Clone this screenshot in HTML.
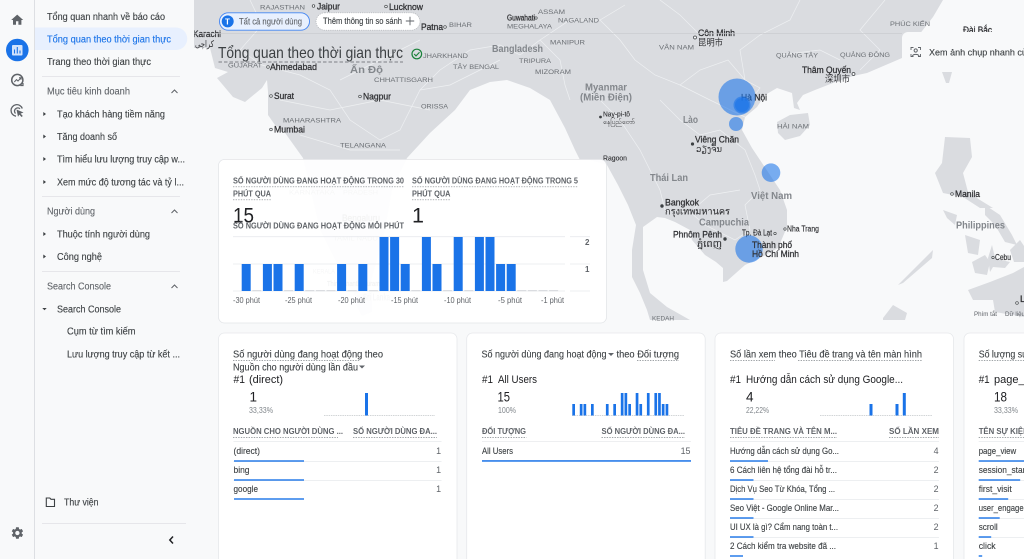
<!DOCTYPE html>
<html lang="vi"><head><meta charset="utf-8"><title>Tổng quan theo thời gian thực</title>
<style>
html,body{margin:0;padding:0;width:1024px;height:559px;overflow:hidden;background:#f8f9fa}
svg{display:block;position:absolute;left:0;top:0;filter:blur(.38px)}
text{font-family:"Liberation Sans","Noto Sans CJK SC","DejaVu Sans",sans-serif;white-space:pre}
.m{font-size:9.8px;fill:#3c4043;stroke:#3c4043;stroke-width:.12}
.g{font-size:9.8px;fill:#5f6368;stroke:#5f6368;stroke-width:.1}
.b{font-size:9.8px;fill:#1a73e8;stroke:#1a73e8;stroke-width:.12}
.c{font-size:9.2px;fill:#303134;stroke:#303134;stroke-width:.28}
.s{font-size:6.8px;fill:#6b6f74}
.n{font-size:10.4px;fill:#83878c;font-weight:bold}
.h{font-size:7.9px;fill:#5f6368;font-weight:bold}
.t{font-size:9.8px;fill:#3c4043;stroke:#3c4043;stroke-width:.1}
.r{font-size:8.9px;fill:#3c4043;stroke:#3c4043;stroke-width:.12}
.v{font-size:8.9px;fill:#5f6368;text-anchor:end}
.k{font-size:11px;fill:#202124}
.p{font-size:8.3px;fill:#80868b}
.a{font-size:8px;fill:#5f6368}
.d{fill:none;stroke:#80868b;stroke-width:.7;stroke-dasharray:1.4 1.2}
.w{fill:none;stroke:#eef0f2;stroke-width:.7}
</style></head><body>
<svg width="1024" height="559" viewBox="0 0 1024 559" xmlns="http://www.w3.org/2000/svg">
<rect width="1024" height="559" fill="#f8f9fa"/>

<!-- MAP -->
<g>
<path fill="#dadce0" d="M194,0H943L933,17L915,40L902,58L867,73L853,76L833,83L815,90L803,95L797,103L800,110L794,108L792,93L777,88L765,95L757,107L745,117L742,130L752,148L760,160L770,175L780,190L787,210L787,227L778,248L760,258L745,265L727,281L723,282L723,268L716,262L705,255L692,240L690,230L675,222L665,218L657,217L643,227L643,270L650,293L667,307L690,320H650L647,310L640,293L632,277L632,250L636,225L628,205L618,185L607,165L590,160L580,160L575,150L565,128L550,100L530,88L507,80L490,82L470,90L455,110L430,133L407,158L392,190L385,230L370,285L355,295L345,280L320,230L303,158L283,130L275,125L268,115L268,92L267,80L262,88L245,102L233,97L217,78L228,72L215,68L210,48L195,48H194Z"/>
<path fill="#dadce0" d="M777,122L790,115L808,113L810,125L800,136L785,140L778,133Z"/>
<path fill="#dadce0" d="M942,72L952,72L949,83L946,83Z"/>
<path fill="#dadce0" d="M945,137L970,138L972,157L963,173L968,192L980,200L993,208L980,208L963,197L943,193L935,173L942,163Z"/>
<path fill="#dadce0" d="M943,210L957,215L955,225L947,218Z"/>
<path fill="#dadce0" d="M985,205L1000,215L1012,235L1017,245L1005,242L995,225L985,215Z"/>
<path fill="#dadce0" d="M965,235L980,240L978,255L968,253Z"/>
<path fill="#dadce0" d="M972,262L985,255L990,262L987,275L975,273Z"/>
<path fill="#dadce0" d="M992,245L996,262L990,272L988,258Z"/>
<path fill="#dadce0" d="M993,258L1010,262L1005,268L993,267Z"/>
<path fill="#dadce0" d="M968,290L990,282L1013,273L1024,267V317L995,312L993,300L973,300Z"/>
<path fill="#dadce0" d="M898,285L923,260L933,250L932,258L903,283Z"/>
<path fill="#dadce0" d="M883,318L893,305L907,313L905,320H883Z"/>
<path fill="#dadce0" d="M356,295L372,292L372,312L362,316L356,305Z"/>
<path fill="#dadce0" d="M1010,250L1020,240L1024,246V262L1014,262Z"/>
<!-- borders -->
<path class="w" d="M250,0L262,25L240,50L262,65L300,75L330,90L350,120L380,140L400,130L420,90L440,70L470,50L500,45L520,55L540,40L560,60"/>
<path class="w" d="M420,90L450,85L500,60M340,80L380,60L420,40M280,100L330,110L380,100L430,110M300,135L350,150L400,150"/>
<path class="w" d="M540,40L570,20L600,20L625,5M560,60L565,85L570,100M600,20L620,40L635,60L655,75L680,85L700,70L728,60L745,80L760,88L752,98M745,117L710,100L680,85M660,100L680,120L700,135L720,130L745,150L755,175L760,190L745,205L750,230L735,240L705,225L690,212L665,210L660,190L650,170L640,150L620,120L600,100L585,90"/>
<path class="w" d="M800,0L790,20L760,35L740,50L745,80M885,0L860,30L880,50L860,70M700,35L680,15L660,0M780,55L820,50L840,60M690,212L710,195L740,190"/>

<g class="s">
<text class="s" x="260" y="9.5" textLength="45" lengthAdjust="spacingAndGlyphs">RAJASTHAN</text>
<text class="s" x="449" y="27" textLength="23" lengthAdjust="spacingAndGlyphs">BIHAR</text>
<text class="s" x="538" y="14" textLength="27" lengthAdjust="spacingAndGlyphs">ASSAM</text>
<text class="s" x="558" y="22.5" textLength="41" lengthAdjust="spacingAndGlyphs">NAGALAND</text>
<text class="s" x="507" y="28.5" textLength="45" lengthAdjust="spacingAndGlyphs">MEGHALAYA</text>
<text class="s" x="550" y="44.5" textLength="35" lengthAdjust="spacingAndGlyphs">MANIPUR</text>
<text class="s" x="423" y="58" textLength="45" lengthAdjust="spacingAndGlyphs">JHARKHAND</text>
<text class="s" x="453" y="69" textLength="46" lengthAdjust="spacingAndGlyphs">TÂY BENGAL</text>
<text class="s" x="519" y="63" textLength="32" lengthAdjust="spacingAndGlyphs">TRIPURA</text>
<text class="s" x="535" y="74" textLength="36" lengthAdjust="spacingAndGlyphs">MIZORAM</text>
<text class="s" x="228" y="67.5" textLength="34" lengthAdjust="spacingAndGlyphs">GUJARAT</text>
<text class="s" x="374" y="82" textLength="59" lengthAdjust="spacingAndGlyphs">CHHATTISGARH</text>
<text class="s" x="421" y="108.5" textLength="27" lengthAdjust="spacingAndGlyphs">ORISSA</text>
<text class="s" x="283" y="122.5" textLength="58" lengthAdjust="spacingAndGlyphs">MAHARASHTRA</text>
<text class="s" x="340" y="147.5" textLength="46" lengthAdjust="spacingAndGlyphs">TELANGANA</text>
<text class="s" x="659" y="49.5" textLength="35" lengthAdjust="spacingAndGlyphs">VÂN NAM</text>
<text class="s" x="776" y="57.5" textLength="42" lengthAdjust="spacingAndGlyphs">QUẢNG TÂY</text>
<text class="s" x="840" y="57" textLength="50" lengthAdjust="spacingAndGlyphs">QUẢNG ĐÔNG</text>
<text class="s" x="890" y="26" textLength="40" lengthAdjust="spacingAndGlyphs">PHÚC KIẾN</text>
<text class="s" x="777" y="128.5" textLength="32" lengthAdjust="spacingAndGlyphs">HẢI NAM</text>
<text class="s" x="652" y="320.5" textLength="22" lengthAdjust="spacingAndGlyphs">KEDAH</text>
<text class="s" x="289" y="194.5" textLength="46" lengthAdjust="spacingAndGlyphs">KARNATAKA</text>
<text class="s" x="343" y="194.5" textLength="35" lengthAdjust="spacingAndGlyphs">PRADESH</text>
<text class="s" x="333" y="240.5" textLength="45" lengthAdjust="spacingAndGlyphs">TAMIL NADU</text>
<text class="s" x="313" y="273.5" textLength="22" lengthAdjust="spacingAndGlyphs">KERALA</text>
</g>
<g>
<text class="n" x="492" y="52" textLength="51" lengthAdjust="spacingAndGlyphs">Bangladesh</text>
<text class="n" x="350" y="73" textLength="33" lengthAdjust="spacingAndGlyphs">Ấn Độ</text>
<text class="n" x="585" y="90.5" textLength="42" lengthAdjust="spacingAndGlyphs">Myanmar</text>
<text class="n" x="580" y="100.5" textLength="52" lengthAdjust="spacingAndGlyphs">(Miền Điện)</text>
<text class="n" x="683" y="123" textLength="15" lengthAdjust="spacingAndGlyphs">Lào</text>
<text class="n" x="650" y="181" textLength="38" lengthAdjust="spacingAndGlyphs">Thái Lan</text>
<text class="n" x="751" y="199" textLength="41" lengthAdjust="spacingAndGlyphs">Việt Nam</text>
<text class="n" x="699" y="225.5" textLength="50" lengthAdjust="spacingAndGlyphs">Campuchia</text>
<text class="n" x="956" y="228.5" textLength="49" lengthAdjust="spacingAndGlyphs">Philippines</text>
</g>
<g>
<text class="c" x="317" y="9.5" textLength="23" lengthAdjust="spacingAndGlyphs">Jaipur</text>
<text class="c" x="389" y="10" textLength="34" lengthAdjust="spacingAndGlyphs">Lucknow</text>
<text class="c" x="421" y="30" textLength="22" lengthAdjust="spacingAndGlyphs">Patna</text>
<text class="c" x="507" y="20.5" textLength="28" lengthAdjust="spacingAndGlyphs" style="font-size:7.8px">Guwahati</text>
<text class="c" x="193" y="37" textLength="28" lengthAdjust="spacingAndGlyphs">Karachi</text>
<text class="c" x="195" y="47" textLength="19" lengthAdjust="spacingAndGlyphs" style="stroke-width:0">کراچی</text>
<text class="c" x="270" y="70" textLength="47" lengthAdjust="spacingAndGlyphs">Ahmedabad</text>
<text class="c" x="274" y="99" textLength="20" lengthAdjust="spacingAndGlyphs">Surat</text>
<text class="c" x="363" y="99.5" textLength="28" lengthAdjust="spacingAndGlyphs">Nagpur</text>
<text class="c" x="274" y="132.5" textLength="31" lengthAdjust="spacingAndGlyphs">Mumbai</text>
<text class="c" x="698" y="36" textLength="37" lengthAdjust="spacingAndGlyphs">Côn Minh</text>
<text class="c" x="698" y="45.5" textLength="25" lengthAdjust="spacingAndGlyphs" style="stroke-width:0">昆明市</text>
<text class="c" x="963" y="33" textLength="29" lengthAdjust="spacingAndGlyphs">Đài Bắc</text>
<text class="c" x="802" y="73" textLength="49" lengthAdjust="spacingAndGlyphs">Thâm Quyến</text>
<text class="c" x="825" y="82" textLength="25" lengthAdjust="spacingAndGlyphs" style="stroke-width:0">深圳市</text>
<text class="c" x="741" y="100.5" textLength="26" lengthAdjust="spacingAndGlyphs">Hà Nội</text>
<text class="c" x="695" y="142.5" textLength="44" lengthAdjust="spacingAndGlyphs">Viêng Chăn</text>
<text class="c" x="696" y="152" textLength="26" lengthAdjust="spacingAndGlyphs" style="stroke-width:0">ວຽງຈັນ</text>
<text class="c" x="603" y="116.5" textLength="27" lengthAdjust="spacingAndGlyphs" style="font-size:7px;stroke-width:.12">Nay-pi-tô</text>
<text class="c" x="603" y="124" textLength="32" lengthAdjust="spacingAndGlyphs" style="font-size:7px;stroke-width:0">နေပြည်တော်</text>
<text class="c" x="603" y="160.5" textLength="24" lengthAdjust="spacingAndGlyphs" style="font-size:7px;stroke-width:.12">Ragoon</text>
<text class="c" x="665" y="205.5" textLength="34" lengthAdjust="spacingAndGlyphs">Bangkok</text>
<text class="c" x="665" y="214.5" textLength="65" lengthAdjust="spacingAndGlyphs" style="stroke-width:.1">กรุงเทพมหานคร</text>
<text class="c" x="742" y="235.5" textLength="30" lengthAdjust="spacingAndGlyphs" style="font-size:7.8px;stroke-width:.15">Tp. Đà Lạt</text>
<text class="c" x="787" y="231.5" textLength="32" lengthAdjust="spacingAndGlyphs" style="font-size:7.8px;stroke-width:.15">Nha Trang</text>
<text class="c" x="673" y="237.5" textLength="49" lengthAdjust="spacingAndGlyphs">Phnôm Pênh</text>
<text class="c" x="697" y="247" textLength="25" lengthAdjust="spacingAndGlyphs" style="stroke-width:.1">ភ្នំពេញ</text>
<text class="c" x="955" y="197" textLength="25" lengthAdjust="spacingAndGlyphs">Manila</text>
<text class="c" x="995" y="260" textLength="16" lengthAdjust="spacingAndGlyphs" style="font-size:7.8px;stroke-width:.15">Cebu</text>
<text class="c" x="1020" y="302">L</text>
<text class="c" x="342" y="221" textLength="38" lengthAdjust="spacingAndGlyphs">Bengaluru</text>
<text class="c" x="327" y="286" textLength="53" lengthAdjust="spacingAndGlyphs" style="font-size:7px">Thiruvananthapuram</text>
<text class="n" x="363" y="300.5" textLength="27" lengthAdjust="spacingAndGlyphs">Sri Lanka</text>
</g>
<g fill="#f8f9fa" stroke="#3c4043" stroke-width=".7">
<circle cx="313.5" cy="6" r="1.3"/><circle cx="386" cy="6.5" r="1.3"/><circle cx="445" cy="27" r="1.3"/><circle cx="536" cy="18" r="1.2"/>
<circle cx="268" cy="67" r="1.3"/><circle cx="271" cy="96" r="1.3"/><circle cx="360" cy="96.5" r="1.3"/><circle cx="271" cy="129.5" r="1.3"/>
<circle cx="695" cy="37.5" r="1.5"/><circle cx="853.5" cy="74" r="1.5"/><circle cx="775" cy="233.5" r="1.2"/><circle cx="785" cy="229" r="1.2"/>
<circle cx="952" cy="194" r="1.3"/><circle cx="993" cy="257.5" r="1.2"/><circle cx="1017" cy="303" r="1.3"/>
</g>
<g fill="#3c4043">
<circle cx="692.5" cy="144" r="1.6"/><circle cx="662" cy="206" r="1.7"/><circle cx="725" cy="239" r="1.7"/><circle cx="600.5" cy="117" r="1.4"/>
</g>
<path d="M194,33.3H902" stroke="#c6c8cc" stroke-width=".7"/>
<text x="974" y="316" class="a" style="font-size:6.2px" textLength="23" lengthAdjust="spacingAndGlyphs">Phím tắt</text>
<text x="1005" y="316" class="a" style="font-size:6.2px">Dữ liệu</text>
<!-- bubbles -->
<g fill="#1a73e8" fill-opacity=".58">
<circle cx="737" cy="97" r="18.5"/><circle cx="742" cy="105" r="8.5"/><circle cx="742" cy="105" r="7"/>
<circle cx="736" cy="124" r="7"/><circle cx="771" cy="172.7" r="9.3"/><circle cx="749" cy="249" r="13.7"/>
</g>
<text class="c" x="752" y="248" textLength="40" lengthAdjust="spacingAndGlyphs">Thành phố</text>
<text class="c" x="752" y="257" textLength="47" lengthAdjust="spacingAndGlyphs">Hồ Chí Minh</text>
</g>

<!-- header chips -->
<rect x="219.5" y="12.8" width="90" height="17.4" rx="8.7" fill="#e8f0fe" stroke="#4285f4" stroke-width=".9"/>
<circle cx="227.7" cy="21.4" r="6" fill="#1a73e8"/>
<text x="225" y="24.4" style="font-size:8px;font-weight:bold;fill:#fff">T</text>
<text class="g" style="font-size:8.8px" x="239" y="24.3" textLength="63" lengthAdjust="spacingAndGlyphs">Tất cả người dùng</text>
<rect x="316" y="12.8" width="104" height="17.4" rx="8.7" fill="#fff" stroke="#aeb1b5" stroke-width=".7" stroke-dasharray="1.2 1"/>
<text class="m" style="font-size:8.8px" x="323" y="24" textLength="79" lengthAdjust="spacingAndGlyphs">Thêm thông tin so sánh</text>
<path d="M410,16.8V25.2M405.8,21H414.2" stroke="#5f6368" stroke-width=".9"/>

<text x="218" y="58" style="font-size:15.6px;fill:#3c4043" textLength="185" lengthAdjust="spacingAndGlyphs">Tổng quan theo thời gian thực</text>
<path d="M218.5,62H403" stroke="#5f6368" stroke-width=".8" stroke-dasharray="3.5 2"/>
<circle cx="416.8" cy="54" r="4.8" fill="none" stroke="#188038" stroke-width="1.2"/>
<path d="M414.2,54L416,55.9L419.5,52.3" fill="none" stroke="#188038" stroke-width="1.1"/>

<!-- snapshot panel -->
<path d="M902,72V38a6,6 0 0 1 6,-6H1024V72Z" fill="#f8f9fa"/>
<g fill="none" stroke="#5f6368" stroke-width="1">
<path d="M911,50V47.5H913.5M918,47.5H920.5V50M911,54V56.5H913.5M918,56.5H920.5V54" stroke-width=".9"/>
<circle cx="915.7" cy="50.5" r="1.6"/>
<path d="M912.5,56C913,53.8 918.4,53.8 919,56"/>
</g>
<text class="m" style="font-size:9.6px" x="929" y="55.5" textLength="103" lengthAdjust="spacingAndGlyphs">Xem ảnh chụp nhanh của</text>

<!-- realtime card -->
<rect x="218.5" y="159.5" width="388" height="163.5" rx="6" fill="#fff" fill-opacity=".94" stroke="#e3e5e8" stroke-width=".8"/>
<text class="h" x="233" y="183.5" textLength="171" lengthAdjust="spacingAndGlyphs">SỐ NGƯỜI DÙNG ĐANG HOẠT ĐỘNG TRONG 30</text>
<text class="h" x="233" y="196.5" textLength="38" lengthAdjust="spacingAndGlyphs">PHÚT QUA</text>
<path class="d" d="M233,186.8H404M233,199.8H271"/>
<text class="h" x="412" y="183.5" textLength="166" lengthAdjust="spacingAndGlyphs">SỐ NGƯỜI DÙNG ĐANG HOẠT ĐỘNG TRONG 5</text>
<text class="h" x="412" y="196.5" textLength="38.5" lengthAdjust="spacingAndGlyphs">PHÚT QUA</text>
<path class="d" d="M412,186.8H578M412,199.8H450.5"/>
<text x="233" y="222.5" style="font-size:21.5px;fill:#202124" textLength="21" lengthAdjust="spacingAndGlyphs">15</text>
<text x="412" y="222.5" style="font-size:21.5px;fill:#202124">1</text>
<text class="h" x="233" y="228.5" textLength="171" lengthAdjust="spacingAndGlyphs">SỐ NGƯỜI DÙNG ĐANG HOẠT ĐỘNG MỖI PHÚT</text>
<g stroke="#e8eaed" stroke-width=".8">
<path d="M233,236.7H565M570,236.7H590M233,264H565M570,264H590M233,291H565M570,291H590"/>
</g>
<g fill="#1a73e8">
<rect x="241.7" y="264" width="9" height="27"/><rect x="262.9" y="264" width="9" height="27"/><rect x="273.5" y="264" width="9" height="27"/><rect x="294.7" y="264" width="9" height="27"/>
<rect x="337.1" y="264" width="9" height="27"/><rect x="358.3" y="264" width="9" height="27"/><rect x="379.5" y="237" width="9" height="54"/><rect x="390.1" y="237" width="9" height="54"/>
<rect x="400.7" y="264" width="9" height="27"/><rect x="421.9" y="237" width="9" height="54"/><rect x="432.5" y="264" width="9" height="27"/><rect x="453.7" y="237" width="9" height="54"/>
<rect x="474.9" y="237" width="9" height="54"/><rect x="485.5" y="237" width="9" height="54"/><rect x="496.1" y="264" width="9" height="27"/><rect x="506.7" y="264" width="9" height="27"/>
</g>
<g fill="#dadce0">
<rect x="252.3" y="290" width="9" height="1.2"/><rect x="284.1" y="290" width="9" height="1.2"/><rect x="305.3" y="290" width="9" height="1.2"/><rect x="315.9" y="290" width="9" height="1.2"/><rect x="326.5" y="290" width="9" height="1.2"/><rect x="347.7" y="290" width="9" height="1.2"/><rect x="368.9" y="290" width="9" height="1.2"/><rect x="411.3" y="290" width="9" height="1.2"/><rect x="443.1" y="290" width="9" height="1.2"/><rect x="464.3" y="290" width="9" height="1.2"/><rect x="517.3" y="290" width="9" height="1.2"/><rect x="527.9" y="290" width="9" height="1.2"/><rect x="538.5" y="290" width="9" height="1.2"/><rect x="549.1" y="290" width="9" height="1.2"/>
</g>
<text class="a" x="585" y="245" style="font-weight:bold">2</text>
<text class="a" x="585" y="272" style="font-weight:bold">1</text>
<g class="a">
<text class="a" x="233" y="303" textLength="27" lengthAdjust="spacingAndGlyphs">-30 phút</text>
<text class="a" x="285" y="303" textLength="27" lengthAdjust="spacingAndGlyphs">-25 phút</text>
<text class="a" x="338" y="303" textLength="27" lengthAdjust="spacingAndGlyphs">-20 phút</text>
<text class="a" x="391" y="303" textLength="27" lengthAdjust="spacingAndGlyphs">-15 phút</text>
<text class="a" x="444" y="303" textLength="27" lengthAdjust="spacingAndGlyphs">-10 phút</text>
<text class="a" x="498" y="303" textLength="24" lengthAdjust="spacingAndGlyphs">-5 phút</text>
<text class="a" x="541" y="303" textLength="23" lengthAdjust="spacingAndGlyphs">-1 phút</text>
</g>

<!-- CARD 1 -->
<rect x="218.5" y="333" width="238.5" height="240" rx="6" fill="#fff" stroke="#e6e8eb" stroke-width=".8"/>
<text class="t" x="233" y="357.3" textLength="150" lengthAdjust="spacingAndGlyphs">Số người dùng đang hoạt động theo</text>
<path class="d" d="M233,360.5H360"/>
<text class="t" x="233" y="370.3" textLength="125" lengthAdjust="spacingAndGlyphs">Nguồn cho người dùng lần đầu</text>
<path d="M359,365.5H365L362,368.5Z" fill="#5f6368"/>
<text class="k" x="233.5" y="383" textLength="11.5" lengthAdjust="spacingAndGlyphs">#1</text>
<text class="k" x="249" y="383" textLength="34" lengthAdjust="spacingAndGlyphs">(direct)</text>
<text x="249.5" y="401.5" style="font-size:13.5px;fill:#202124">1</text>
<text class="p" x="249" y="413" textLength="24" lengthAdjust="spacingAndGlyphs">33,33%</text>
<path d="M324,415.5H435" stroke="#c4c7ca" stroke-width=".7" stroke-dasharray="1.5 .8"/>
<rect x="365" y="393" width="3" height="22.5" fill="#1a73e8"/>
<text class="h" x="233" y="434" textLength="110" lengthAdjust="spacingAndGlyphs">NGUỒN CHO NGƯỜI DÙNG ...</text>
<text class="h" x="353" y="434" textLength="84" lengthAdjust="spacingAndGlyphs">SỐ NGƯỜI DÙNG ĐA...</text>
<path class="d" d="M233,437.5H338M353,437.5H437"/>
<path d="M233.5,441.5H441.5M233.5,461.5H441.5M233.5,480.5H441.5" stroke="#e8eaed" stroke-width=".8"/>
<text class="r" x="233.5" y="454" textLength="26.5" lengthAdjust="spacingAndGlyphs">(direct)</text><text class="v" x="441" y="454">1</text>
<text class="r" x="233.5" y="473" textLength="16" lengthAdjust="spacingAndGlyphs">bing</text><text class="v" x="441" y="473">1</text>
<text class="r" x="233.5" y="492" textLength="24.5" lengthAdjust="spacingAndGlyphs">google</text><text class="v" x="441" y="492">1</text>
<g fill="#1a73e8"><rect x="234" y="460.3" width="70" height="1.4"/><rect x="234" y="479.3" width="70" height="1.4"/><rect x="234" y="498.3" width="70" height="1.4"/></g>

<!-- CARD 2 -->
<rect x="466.7" y="333" width="238.5" height="240" rx="6" fill="#fff" stroke="#e6e8eb" stroke-width=".8"/>
<text class="t" x="481.5" y="357.3" textLength="125" lengthAdjust="spacingAndGlyphs">Số người dùng đang hoạt động</text>
<path d="M608,353H614L611,356Z" fill="#5f6368"/>
<text class="t" x="616.5" y="357.3" textLength="62.5" lengthAdjust="spacingAndGlyphs">theo Đối tượng</text>
<path class="d" d="M637,360.5H679"/>
<text class="k" x="482" y="383" textLength="11" lengthAdjust="spacingAndGlyphs">#1</text>
<text class="k" x="498" y="383" textLength="39" lengthAdjust="spacingAndGlyphs">All Users</text>
<text x="497.5" y="401.5" style="font-size:13.5px;fill:#202124" textLength="12.5" lengthAdjust="spacingAndGlyphs">15</text>
<text class="p" x="498" y="413" textLength="18" lengthAdjust="spacingAndGlyphs">100%</text>
<path d="M572,415.5H684" stroke="#c4c7ca" stroke-width=".7" stroke-dasharray="1.5 .8"/>
<g fill="#1a73e8">
<rect x="572.3" y="404" width="2.7" height="11.5"/><rect x="579.8" y="404" width="2.7" height="11.5"/><rect x="583.5" y="404" width="2.7" height="11.5"/><rect x="591" y="404" width="2.7" height="11.5"/>
<rect x="605.9" y="404" width="2.7" height="11.5"/><rect x="613.3" y="404" width="2.7" height="11.5"/><rect x="620.8" y="393" width="2.7" height="22.5"/><rect x="624.5" y="393" width="2.7" height="22.5"/>
<rect x="628.3" y="404" width="2.7" height="11.5"/><rect x="635.7" y="393" width="2.7" height="22.5"/><rect x="639.4" y="404" width="2.7" height="11.5"/><rect x="646.9" y="393" width="2.7" height="22.5"/>
<rect x="654.4" y="393" width="2.7" height="22.5"/><rect x="658.1" y="393" width="2.7" height="22.5"/><rect x="661.8" y="404" width="2.7" height="11.5"/><rect x="665.6" y="404" width="2.7" height="11.5"/>
</g>
<text class="h" x="482" y="434" textLength="44" lengthAdjust="spacingAndGlyphs">ĐỐI TƯỢNG</text>
<text class="h" x="601.5" y="434" textLength="83.5" lengthAdjust="spacingAndGlyphs">SỐ NGƯỜI DÙNG ĐA...</text>
<path class="d" d="M482,437.5H526.5M601.5,437.5H685"/>
<path d="M482,441.5H691" stroke="#e8eaed" stroke-width=".8"/>
<text class="r" x="482" y="454" textLength="31" lengthAdjust="spacingAndGlyphs">All Users</text><text class="v" x="690.5" y="454">15</text>
<rect x="482" y="460.2" width="209" height="1.5" fill="#1a73e8"/>

<!-- CARD 3 -->
<rect x="715" y="333" width="238.5" height="240" rx="6" fill="#fff" stroke="#e6e8eb" stroke-width=".8"/>
<text class="t" x="730" y="357.3" textLength="192" lengthAdjust="spacingAndGlyphs">Số lần xem theo Tiêu đề trang và tên màn hình</text>
<path class="d" d="M730,360.5H775M798,360.5H922"/>
<text class="k" x="730" y="383" textLength="11" lengthAdjust="spacingAndGlyphs">#1</text>
<text class="k" x="746" y="383" textLength="157" lengthAdjust="spacingAndGlyphs">Hướng dẫn cách sử dụng Google...</text>
<text x="746" y="401.5" style="font-size:13.5px;fill:#202124">4</text>
<text class="p" x="746" y="413" textLength="23" lengthAdjust="spacingAndGlyphs">22,22%</text>
<path d="M820,415.5H932" stroke="#c4c7ca" stroke-width=".7" stroke-dasharray="1.5 .8"/>
<g fill="#1a73e8"><rect x="869.5" y="404" width="3" height="11.5"/><rect x="895.5" y="404" width="3" height="11.5"/><rect x="902.8" y="393" width="3" height="22.5"/></g>
<text class="h" x="730" y="434" textLength="107" lengthAdjust="spacingAndGlyphs">TIÊU ĐỀ TRANG VÀ TÊN M...</text>
<text class="h" x="889" y="434" textLength="50" lengthAdjust="spacingAndGlyphs">SỐ LẦN XEM</text>
<path class="d" d="M730,437.5H837M889,437.5H939"/>
<path d="M730,441.5H939M730,461.5H939M730,480.5H939M730,499.5H939M730,518.5H939M730,537.5H939" stroke="#e8eaed" stroke-width=".8"/>
<text class="r" x="730" y="454" textLength="109" lengthAdjust="spacingAndGlyphs">Hướng dẫn cách sử dụng Go...</text><text class="v" x="938.5" y="454">4</text>
<text class="r" x="730" y="473" textLength="107" lengthAdjust="spacingAndGlyphs">6 Cách liên hệ tổng đài hỗ tr...</text><text class="v" x="938.5" y="473">2</text>
<text class="r" x="730" y="492" textLength="105" lengthAdjust="spacingAndGlyphs">Dịch Vụ Seo Từ Khóa, Tổng ...</text><text class="v" x="938.5" y="492">2</text>
<text class="r" x="730" y="511" textLength="109" lengthAdjust="spacingAndGlyphs">Seo Việt - Google Online Mar...</text><text class="v" x="938.5" y="511">2</text>
<text class="r" x="730" y="530" textLength="108" lengthAdjust="spacingAndGlyphs">UI UX là gì? Cẩm nang toàn t...</text><text class="v" x="938.5" y="530">2</text>
<text class="r" x="730" y="549" textLength="106" lengthAdjust="spacingAndGlyphs">2 Cách kiểm tra website đã ...</text><text class="v" x="938.5" y="549">1</text>
<g fill="#1a73e8"><rect x="730" y="460.3" width="38" height="1.4"/><rect x="730" y="479.3" width="23.5" height="1.4"/><rect x="730" y="498.3" width="23.5" height="1.4"/><rect x="730" y="517.3" width="23.5" height="1.4"/><rect x="730" y="536.3" width="23.5" height="1.4"/><rect x="730" y="555.3" width="13" height="1.4"/></g>

<!-- CARD 4 -->
<rect x="964" y="333" width="238" height="240" rx="6" fill="#fff" stroke="#e6e8eb" stroke-width=".8"/>
<text class="t" x="978.7" y="357.3" textLength="68" lengthAdjust="spacingAndGlyphs">Số lượng sự kiện</text>
<path class="d" d="M978.7,360.5H1024"/>
<text class="k" x="978.7" y="383" textLength="11" lengthAdjust="spacingAndGlyphs">#1</text>
<text class="k" x="994" y="383">page_view</text>
<text x="994" y="401.5" style="font-size:13.5px;fill:#202124" textLength="13" lengthAdjust="spacingAndGlyphs">18</text>
<text class="p" x="994" y="413" textLength="24" lengthAdjust="spacingAndGlyphs">33,33%</text>
<text class="h" x="978.7" y="434" textLength="50" lengthAdjust="spacingAndGlyphs">TÊN SỰ KIỆN</text>
<path class="d" d="M978.7,437.5H1024"/>
<path d="M978.7,441.5H1024M978.7,461.5H1024M978.7,480.5H1024M978.7,499.5H1024M978.7,518.5H1024M978.7,537.5H1024" stroke="#e8eaed" stroke-width=".8"/>
<text class="r" x="978.7" y="454" textLength="37.5" lengthAdjust="spacingAndGlyphs">page_view</text>
<text class="r" x="978.7" y="473" textLength="49" lengthAdjust="spacingAndGlyphs">session_start</text>
<text class="r" x="978.7" y="492" textLength="33" lengthAdjust="spacingAndGlyphs">first_visit</text>
<text class="r" x="978.7" y="511" textLength="62" lengthAdjust="spacingAndGlyphs">user_engagement</text>
<text class="r" x="978.7" y="530" textLength="19" lengthAdjust="spacingAndGlyphs">scroll</text>
<text class="r" x="978.7" y="549" textLength="17" lengthAdjust="spacingAndGlyphs">click</text>
<g fill="#1a73e8"><rect x="978.7" y="460.3" width="46" height="1.4"/><rect x="978.7" y="479.3" width="41.5" height="1.4"/><rect x="978.7" y="498.3" width="29.5" height="1.4"/><rect x="978.7" y="517.3" width="21" height="1.4"/><rect x="978.7" y="536.3" width="12.5" height="1.4"/><rect x="978.7" y="555.3" width="3.5" height="1.4"/></g>

<!-- SIDEBAR -->
<rect x="0" y="0" width="194" height="559" fill="#f8f9fa"/>
<path d="M34.5,0V559" stroke="#dadce0" stroke-width=".9"/>
<path d="M35,27.5H176a11.2,11.2 0 0 1 0,22.5H35Z" fill="#e8f0fe"/>
<text class="m" x="47" y="19.8" textLength="118" lengthAdjust="spacingAndGlyphs">Tổng quan nhanh về báo cáo</text>
<text class="b" x="47" y="42.3" textLength="124" lengthAdjust="spacingAndGlyphs">Tổng quan theo thời gian thực</text>
<text class="m" x="47" y="65" textLength="104" lengthAdjust="spacingAndGlyphs">Trang theo thời gian thực</text>
<path d="M42,76.3H180M42,196.3H180M42,271.3H180M42,523.3H186" stroke="#dadce0" stroke-width=".7"/>
<text class="g" x="47" y="94.5" textLength="83" lengthAdjust="spacingAndGlyphs">Mục tiêu kinh doanh</text>
<text class="m" x="57" y="117.3" textLength="108" lengthAdjust="spacingAndGlyphs">Tạo khách hàng tiềm năng</text>
<text class="m" x="57" y="140" textLength="60" lengthAdjust="spacingAndGlyphs">Tăng doanh số</text>
<text class="m" x="57" y="162.5" textLength="128" lengthAdjust="spacingAndGlyphs">Tìm hiểu lưu lượng truy cập w...</text>
<text class="m" x="57" y="185.3" textLength="127" lengthAdjust="spacingAndGlyphs">Xem mức độ tương tác và tỷ l...</text>
<text class="g" x="47" y="214.5" textLength="48" lengthAdjust="spacingAndGlyphs">Người dùng</text>
<text class="m" x="57" y="237.3" textLength="93" lengthAdjust="spacingAndGlyphs">Thuộc tính người dùng</text>
<text class="m" x="57" y="260" textLength="45" lengthAdjust="spacingAndGlyphs">Công nghệ</text>
<text class="g" x="47" y="289.5" textLength="64" lengthAdjust="spacingAndGlyphs">Search Console</text>
<text class="m" x="57" y="312.3" textLength="64" lengthAdjust="spacingAndGlyphs">Search Console</text>
<text class="m" x="67" y="334.5" textLength="68.5" lengthAdjust="spacingAndGlyphs">Cụm từ tìm kiếm</text>
<text class="m" x="67" y="357.3" textLength="113" lengthAdjust="spacingAndGlyphs">Lưu lượng truy cập từ kết ...</text>
<text class="m" x="64" y="505.5" textLength="34.5" lengthAdjust="spacingAndGlyphs">Thư viện</text>
<!-- tree arrows -->
<g fill="#3c4043">
<path d="M43.3,112L46,114L43.3,116ZM43.3,134.5L46,136.5L43.3,138.5ZM43.3,157L46,159L43.3,161ZM43.3,180L46,182L43.3,184ZM43.3,232L46,234L43.3,236ZM43.3,254.5L46,256.5L43.3,258.5Z"/>
<path d="M42.3,308L46.7,308L44.5,310.3Z"/>
</g>
<path d="M171.5,93L174.5,90L177.5,93M171.5,213L174.5,210L177.5,213M171.5,288L174.5,285L177.5,288" fill="none" stroke="#5f6368" stroke-width="1"/>
<!-- folder -->
<path d="M46.3,498H49.8L51,499.3H54.5V506.5H46.3Z" fill="none" stroke="#3c4043" stroke-width="1.1"/>
<!-- chevron -->
<path d="M173,536.5L169.8,540L173,543.5" fill="none" stroke="#202124" stroke-width="1.5"/>
<!-- rail icons -->
<path transform="translate(10,12.8) scale(.6)" fill="#5f6368" d="M10 20v-6h4v6h5v-8h3L12 3 2 12h3v8z"/>
<circle cx="17.3" cy="50" r="11.3" fill="#1a73e8"/>
<rect x="12" y="45" width="10.5" height="10.5" rx="1" fill="#d2e3fc"/>
<path d="M14.5,49.5V53.5M17.3,47V53.5M20,50.5V53.5" stroke="#1a73e8" stroke-width="1.1"/>
<circle cx="17.3" cy="80" r="5.6" fill="none" stroke="#5f6368" stroke-width="1.5"/>
<path d="M14.3,82L16.5,79.6L18,81L20.8,78M19,77.8H21V79.8" fill="none" stroke="#5f6368" stroke-width="1"/>
<path d="M20.3,85.5L23,85.5L23,83" fill="none" stroke="#5f6368" stroke-width="1.2"/>
<path d="M22.3,108.5A5.8,5.8 0 1 0 16,116.2M20,108.8A3.2,3.2 0 1 0 15.5,113.5" fill="none" stroke="#5f6368" stroke-width="1.3"/>
<path d="M16.5,109.5L23.5,112.5L20.6,113.6L22.8,116L21.5,117L19.4,114.6L18,116.8Z" fill="#5f6368"/>
<path transform="translate(10.2,525.8) scale(.6)" fill="#5f6368" d="M19.14 12.94c.04-.3.06-.61.06-.94 0-.32-.02-.64-.07-.94l2.03-1.58c.18-.14.23-.41.12-.61l-1.92-3.32c-.12-.22-.37-.29-.59-.22l-2.39.96c-.5-.38-1.03-.7-1.62-.94l-.36-2.54c-.04-.24-.24-.41-.48-.41h-3.84c-.24 0-.43.17-.47.41l-.36 2.54c-.59.24-1.13.57-1.62.94l-2.39-.96c-.22-.08-.47 0-.59.22L2.74 8.87c-.12.21-.08.47.12.61l2.03 1.58c-.05.3-.09.63-.09.94s.02.64.07.94l-2.03 1.58c-.18.14-.23.41-.12.61l1.92 3.32c.12.22.37.29.59.22l2.39-.96c.5.38 1.03.7 1.62.94l.36 2.54c.05.24.24.41.48.41h3.84c.24 0 .44-.17.47-.41l.36-2.54c.59-.24 1.13-.56 1.62-.94l2.39.96c.22.08.47 0 .59-.22l1.92-3.32c.12-.22.07-.47-.12-.61l-2.01-1.58zM12 15.6c-1.98 0-3.6-1.62-3.6-3.6s1.62-3.6 3.6-3.6 3.6 1.62 3.6 3.6-1.62 3.6-3.6 3.6z"/>
</svg>
</body></html>
